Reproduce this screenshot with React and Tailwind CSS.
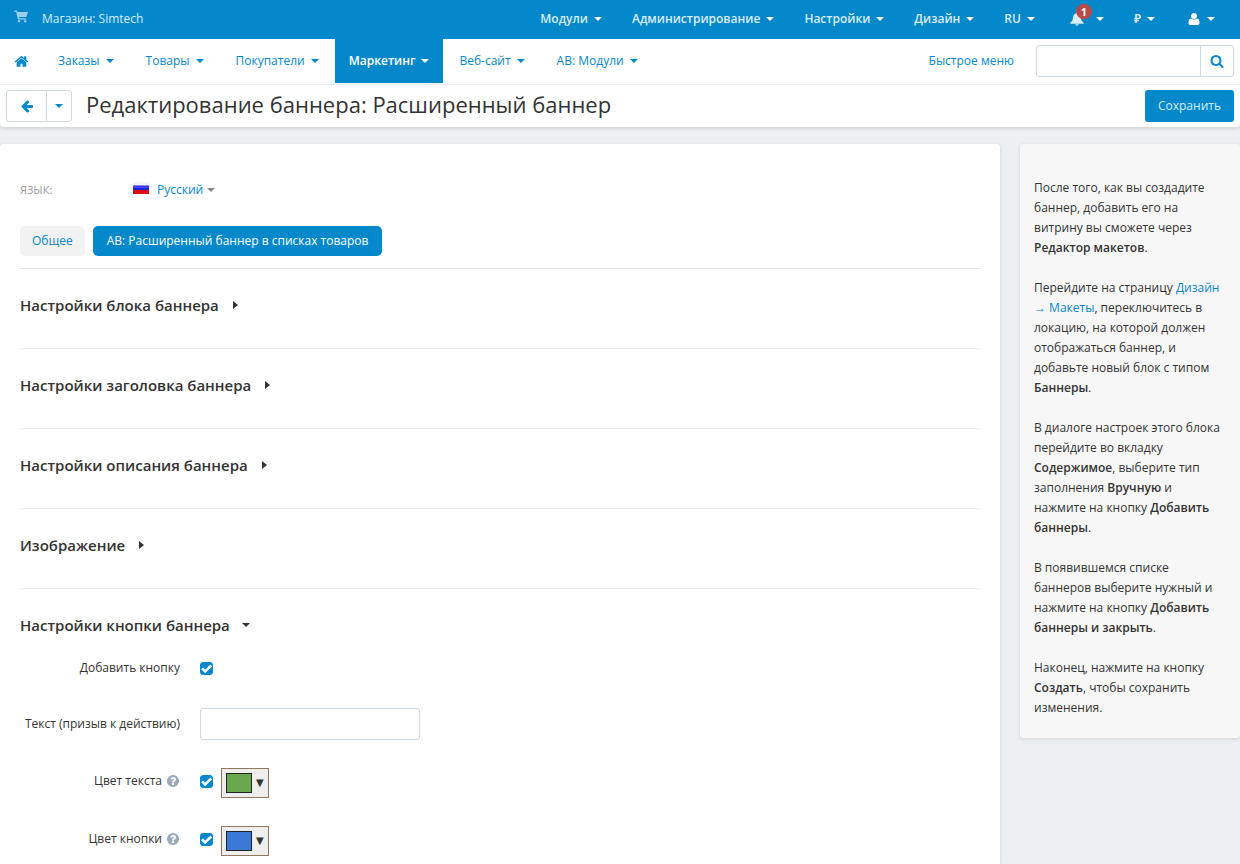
import React, { useState } from 'react';

const ICONS = {
  home: 'M1472 992v480q0 26-19 45t-45 19h-384v-384h-256v384h-384q-26 0-45-19t-19-45v-480q0-1 .5-3t.5-3l575-474 575 474q1 2 1 6zm223-69l-62 74q-8 9-21 11h-3q-13 0-21-7l-692-577-692 577q-12 8-24 7-13-2-21-11l-62-74q-8-10-7-23.5t11-21.5l719-599q32-26 76-26t76 26l244 204v-195q0-14 9-23t23-9h192q14 0 23 9t9 23v408l219 182q10 8 11 21.5t-7 23.5z',
  search: 'M1216 832q0-185-131.5-316.5t-316.5-131.5-316.5 131.5-131.5 316.5 131.5 316.5 316.5 131.5 316.5-131.5 131.5-316.5zm512 832q0 52-38 90t-90 38q-54 0-90-38l-343-342q-179 124-399 124-143 0-273.5-55.5t-225-150-150-225-55.5-273.5 55.5-273.5 150-225 225-150 273.5-55.5 273.5 55.5 225 150 150 225 55.5 273.5q0 220-124 399l343 343q37 37 37 90z',
  back: 'M1664 896v128q0 53-32.5 90.5t-84.5 37.5h-704l293 294q38 36 38 90t-38 90l-75 76q-37 37-90 37-52 0-91-37l-651-652q-37-37-37-90 0-52 37-91l651-650q38-38 91-38 52 0 90 38l75 74q38 38 38 91t-38 91l-293 293h704q52 0 84.5 37.5t32.5 90.5z',
  question: 'M1024 1376v-192q0-14-9-23t-23-9h-192q-14 0-23 9t-9 23v192q0 14 9 23t23 9h192q14 0 23-9t9-23zm256-672q0-88-55.5-163t-138.5-116-170-41q-243 0-371 213-15 24 8 42l132 100q7 6 19 6 16 0 25-12 53-68 86-92 34-24 86-24 48 0 85.5 26t37.5 59q0 38-20 61t-68 45q-63 28-115.5 86.5t-52.5 125.5v36q0 14 9 23t23 9h192q14 0 23-9t9-23q0-19 21.5-49.5t54.5-49.5q32-18 49-28.5t46-35 44.5-48 28-60.5 12.5-81zm384 192q0 209-103 385.5t-279.5 279.5-385.5 103-385.5-103-279.5-279.5-103-385.5 103-385.5 279.5-279.5 385.5-103 385.5 103 279.5 279.5 103 385.5z',
  user: 'M1600 1405q0 120-73 189.5t-194 69.5h-874q-121 0-194-69.5t-73-189.5q0-53 3.5-103.5t14-109 26.5-108.5 43-97.5 62-81 85.5-53.5 111.5-20q9 0 42 21.5t74.5 48 108 48 133.5 21.5 133.5-21.5 108-48 74.5-48 42-21.5q61 0 111.5 20t85.5 53.5 62 81 43 97.5 26.5 108.5 14 109 3.5 103.5zm-320-893q0 159-112.5 271.5t-271.5 112.5-271.5-112.5-112.5-271.5 112.5-271.5 271.5-112.5 271.5 112.5 112.5 271.5z',
};

const Icon = ({ name, className }) => (
  <svg viewBox="0 0 1792 1792" fill="currentColor" className={className} aria-hidden="true">
    <path d={ICONS[name]} />
  </svg>
);

const Caret = ({ className = '' }) => (
  <span className={`inline-block w-0 h-0 border-x-4 border-t-4 border-x-transparent border-t-current ${className}`} />
);

const TOP_MENU = ['Модули', 'Администрирование', 'Настройки', 'Дизайн', 'RU'];

const MAIN_MENU = [
  { label: 'Заказы' },
  { label: 'Товары' },
  { label: 'Покупатели' },
  { label: 'Маркетинг', active: true },
  { label: 'Веб-сайт' },
  { label: 'АВ: Модули' },
];

const SECTIONS = [
  'Настройки блока баннера',
  'Настройки заголовка баннера',
  'Настройки описания баннера',
  'Изображение',
];

const TopBar = () => (
  <header className="flex items-center justify-between h-[39px] pl-3.5 pr-2.5 pb-0.5 bg-[#0388cc] text-white">
    <a href="#store" className="flex items-center gap-3.5 font-medium text-[#d9edf7]">
      <svg viewBox="0 0 14 13" className="w-3.5 h-[13px] mb-1 opacity-70" fill="currentColor" aria-hidden="true">
        <path d="M0 .6h2.900l.5 1.500H14l-1.700 5H4.900l.3 1.200h6.900v1.200H4L2 1.800H0z" />
        <circle cx="5" cy="11.200" r="1.200" />
        <circle cx="11.200" cy="11.200" r="1.200" />
      </svg>
      Магазин: Simtech
    </a>
    <nav className="flex items-center h-full">
      {TOP_MENU.map(label => (
        <button key={label} className="flex items-center gap-1.5 px-[15px] h-full font-semibold">
          <span className="text-[#d9edf7]">{label}</span>
          <Caret />
        </button>
      ))}
      <button aria-label="Уведомления" className="flex items-center gap-3 pl-5 pr-[15px] h-full">
        <span className="relative text-[#d9edf7]">
          <svg viewBox="0 0 14 14" className="w-3.5 h-3.5" fill="currentColor" aria-hidden="true">
            <path d="M7 0l1.200 1.200C10 2 10.800 3.500 11 5.500c.2 2.500.8 4 3 5.500l-.6.8H.6L0 11c2.200-1.500 2.800-3 3-5.500.2-2 1-3.500 2.800-4.300z" />
            <path d="M5 12.200h4L7.600 13.800H6.400z" />
          </svg>
          <span className="absolute -top-2 left-1.5 flex items-center justify-center w-4 h-[15px] rounded-full bg-[#b94a48] text-white text-[11px] font-bold leading-none">1</span>
        </span>
        <Caret />
      </button>
      <button className="flex items-center gap-1.5 px-[15px] h-full font-semibold">
        <span className="text-[#d9edf7]">₽</span>
        <Caret />
      </button>
      <button aria-label="Профиль" className="flex items-center gap-1.5 pl-[17px] pr-[15px] h-full">
        <Icon name="user" className="w-3.5 h-3.5" />
        <Caret />
      </button>
    </nav>
  </header>
);

const MainMenu = () => (
  <div className="flex justify-between h-[46px] pr-1.5 bg-white border-b border-[#f3f4f5] text-[#0388cc]">
    <nav className="flex h-[44px]">
      <a href="#home" aria-label="Главная" className="flex items-center pl-3.5 pr-[13px]">
        <Icon name="home" className="w-[15px] h-[15px]" />
      </a>
      {MAIN_MENU.map(({ label, active }) => (
        <button
          key={label}
          className={active
            ? 'flex items-center gap-1.5 px-3.5 font-semibold bg-[#0388cc] text-white'
            : 'flex items-center gap-1.5 px-4 font-medium'}
        >
          {label}
          <Caret />
        </button>
      ))}
    </nav>
    <div className="flex items-center h-[44px]">
      <a href="#quick" className="mr-[22px]">Быстрое меню</a>
      <form className="flex h-8 border border-[#cfd9e2] rounded-[3px]" onSubmit={e => e.preventDefault()}>
        <input type="text" aria-label="Поиск" className="w-[163px] px-2 outline-none" />
        <button aria-label="Найти" className="flex items-center justify-center w-[33px] border-l border-[#cfd9e2]">
          <Icon name="search" className="w-3.5 h-3.5" />
        </button>
      </form>
    </div>
  </div>
);

const TitleBar = () => (
  <div className="flex items-center h-[42px] px-1.5 bg-white rounded-b shadow-[0_1px_4px_rgba(0,0,0,0.15)]">
    <div className="flex h-8 border border-[#cfd9e2] rounded-[3px] text-[#0388cc]">
      <button aria-label="Назад" className="flex items-center justify-center w-[39px]">
        <Icon name="back" className="w-3.5 h-3.5" />
      </button>
      <button aria-label="Последние страницы" className="flex items-center justify-center w-[25px] border-l border-[#cfd9e2]">
        <Caret />
      </button>
    </div>
    <h1 className="flex-1 ml-3.5 pb-1 text-[22px] leading-8 text-[#333]">Редактирование баннера: Расширенный баннер</h1>
    <button className="h-8 px-[13px] rounded-[3px] bg-[#0388cc] text-[#d9edf7]">Сохранить</button>
  </div>
);

const CheckBox = ({ id, checked, onChange }) => (
  <span className="relative flex w-[13px] h-[13px]">
    <input
      id={id}
      type="checkbox"
      checked={checked}
      onChange={e => onChange(e.target.checked)}
      className="appearance-none w-full h-full rounded-[3px] border border-[#0388cc] bg-white checked:bg-[#0388cc]"
    />
    {checked && (
      <svg viewBox="0 0 13 13" className="absolute inset-0 pointer-events-none" fill="none" stroke="#fff" strokeWidth="2.6" aria-hidden="true">
        <path d="M2 6.300l3.200 3.200L11.300 3.400" />
      </svg>
    )}
  </span>
);

const Field = ({ id, label, help, children }) => (
  <div className="flex items-center gap-5">
    <label htmlFor={id} className="flex items-center justify-end gap-1 w-40 whitespace-nowrap">
      {label}
      {help && <Icon name="question" className="w-3.5 h-3.5 text-[#9aaaba]" />}
    </label>
    <div className="flex items-center gap-2 min-h-8">{children}</div>
  </div>
);

const ColorPicker = ({ label, swatch }) => (
  <button aria-label={label} className="flex items-center gap-1 w-12 h-[30px] mt-1 pl-1 border border-[#91765d] bg-[#eee] text-[#333]">
    <span className={`w-[26px] h-5 border border-[#222] ${swatch}`} />
    <span className="text-[10px] leading-4 font-['DejaVu_Sans']">▼</span>
  </button>
);

const ButtonSettings = () => {
  const [hasButton, setHasButton] = useState(true);
  const [textColor, setTextColor] = useState(true);
  const [buttonColor, setButtonColor] = useState(true);

  return (
    <section>
      <h4 className="flex items-center gap-3 pt-6 text-[15px] leading-6 font-semibold">
        Настройки кнопки баннера <Caret />
      </h4>
      <div className="flex flex-col gap-6 pt-[15px] pb-2">
        <Field id="add_button" label="Добавить кнопку">
          <CheckBox id="add_button" checked={hasButton} onChange={setHasButton} />
        </Field>
        <Field id="button_text" label="Текст (призыв к действию)">
          <input id="button_text" type="text" className="w-[220px] h-8 px-2 border border-[#cfd9e2] rounded-[3px] outline-none" />
        </Field>
        <Field id="text_color" label="Цвет текста" help>
          <CheckBox id="text_color" checked={textColor} onChange={setTextColor} />
          <ColorPicker label="Выбрать цвет текста" swatch="bg-[#6aa84f]" />
        </Field>
        <Field id="button_color" label="Цвет кнопки" help>
          <CheckBox id="button_color" checked={buttonColor} onChange={setButtonColor} />
          <ColorPicker label="Выбрать цвет кнопки" swatch="bg-[#3c78d8]" />
        </Field>
      </div>
    </section>
  );
};

const Sidebar = () => (
  <aside className="flex flex-col gap-5 w-[220px] shrink-0 pt-[34px] pb-5 pl-3.5 pr-[18px] rounded bg-[#f7f7f7] shadow-[0_1px_4px_rgba(0,0,0,0.12)] leading-5">
    <p>
      После того, как вы создадите баннер, добавить его на витрину вы сможете через <b className="font-semibold">Редактор макетов</b>.
    </p>
    <p>
      Перейдите на страницу <a href="#layouts" className="text-[#0388cc]">Дизайн → Макеты</a>, переключитесь в локацию, на которой должен отображаться баннер, и добавьте новый блок с типом <b className="font-semibold">Баннеры</b>.
    </p>
    <p>
      В диалоге настроек этого блока перейдите во вкладку <b className="font-semibold">Содержимое</b>, выберите тип заполнения <b className="font-semibold">Вручную</b> и нажмите на кнопку <b className="font-semibold">Добавить баннеры</b>.
    </p>
    <p>
      В появившемся списке баннеров выберите нужный и нажмите на кнопку <b className="font-semibold">Добавить баннеры и закрыть</b>.
    </p>
    <p>
      Наконец, нажмите на кнопку <b className="font-semibold">Создать</b>, чтобы сохранить изменения.
    </p>
  </aside>
);

const App = () => (
  <div className="min-h-screen flex flex-col bg-[#ecf0f3] font-['Open_Sans','Noto_Sans',sans-serif] text-xs leading-5 text-[#333]">
    <TopBar />
    <MainMenu />
    <TitleBar />
    <div className="flex flex-1 items-start gap-5 pt-[17px]">
      <main className="flex-1 self-stretch px-5 rounded-t bg-white shadow-[0_1px_4px_rgba(0,0,0,0.12)]">
        <div className="flex items-center pt-9">
          <span className="w-[113px] text-[11px] text-[#999] uppercase">Язык:</span>
          <button className="flex items-center text-[#0388cc]">
            <svg viewBox="0 0 16 12" className="w-4 h-3 mr-2 mb-1" aria-hidden="true">
              <path fill="#f4f4f8" d="M0 0h16v4H0z" />
              <path fill="#2020d8" d="M0 3.500h16V8H0z" />
              <path fill="#4848ff" d="M0 4.500h16v1.500H0z" />
              <path fill="#d81010" d="M0 8h16v4H0z" />
            </svg>
            Русский
            <Caret className="ml-1 text-[#888]" />
          </button>
        </div>

        {/* Tabs */}
        <div className="flex gap-2 pt-[26px] pb-3 border-b border-[#e1e5ea]">
          <button className="h-[30px] px-3 rounded-[5px] bg-[#f2f2f2] text-[#0388cc]">Общее</button>
          <button className="h-[30px] px-3.5 rounded-[5px] bg-[#0388cc] text-white font-medium">АВ: Расширенный баннер в списках товаров</button>
        </div>

        {SECTIONS.map(title => (
          <section key={title} className="h-20 pt-6 border-b border-[#eaeaea]">
            <h4 className="flex items-center gap-3.5 text-[15px] leading-6 font-semibold">
              {title}
              <span className="w-0 h-0 border-y-4 border-l-[5px] border-y-transparent border-l-current" />
            </h4>
          </section>
        ))}

        <ButtonSettings />
      </main>
      <Sidebar />
    </div>
  </div>
);

export default App;
